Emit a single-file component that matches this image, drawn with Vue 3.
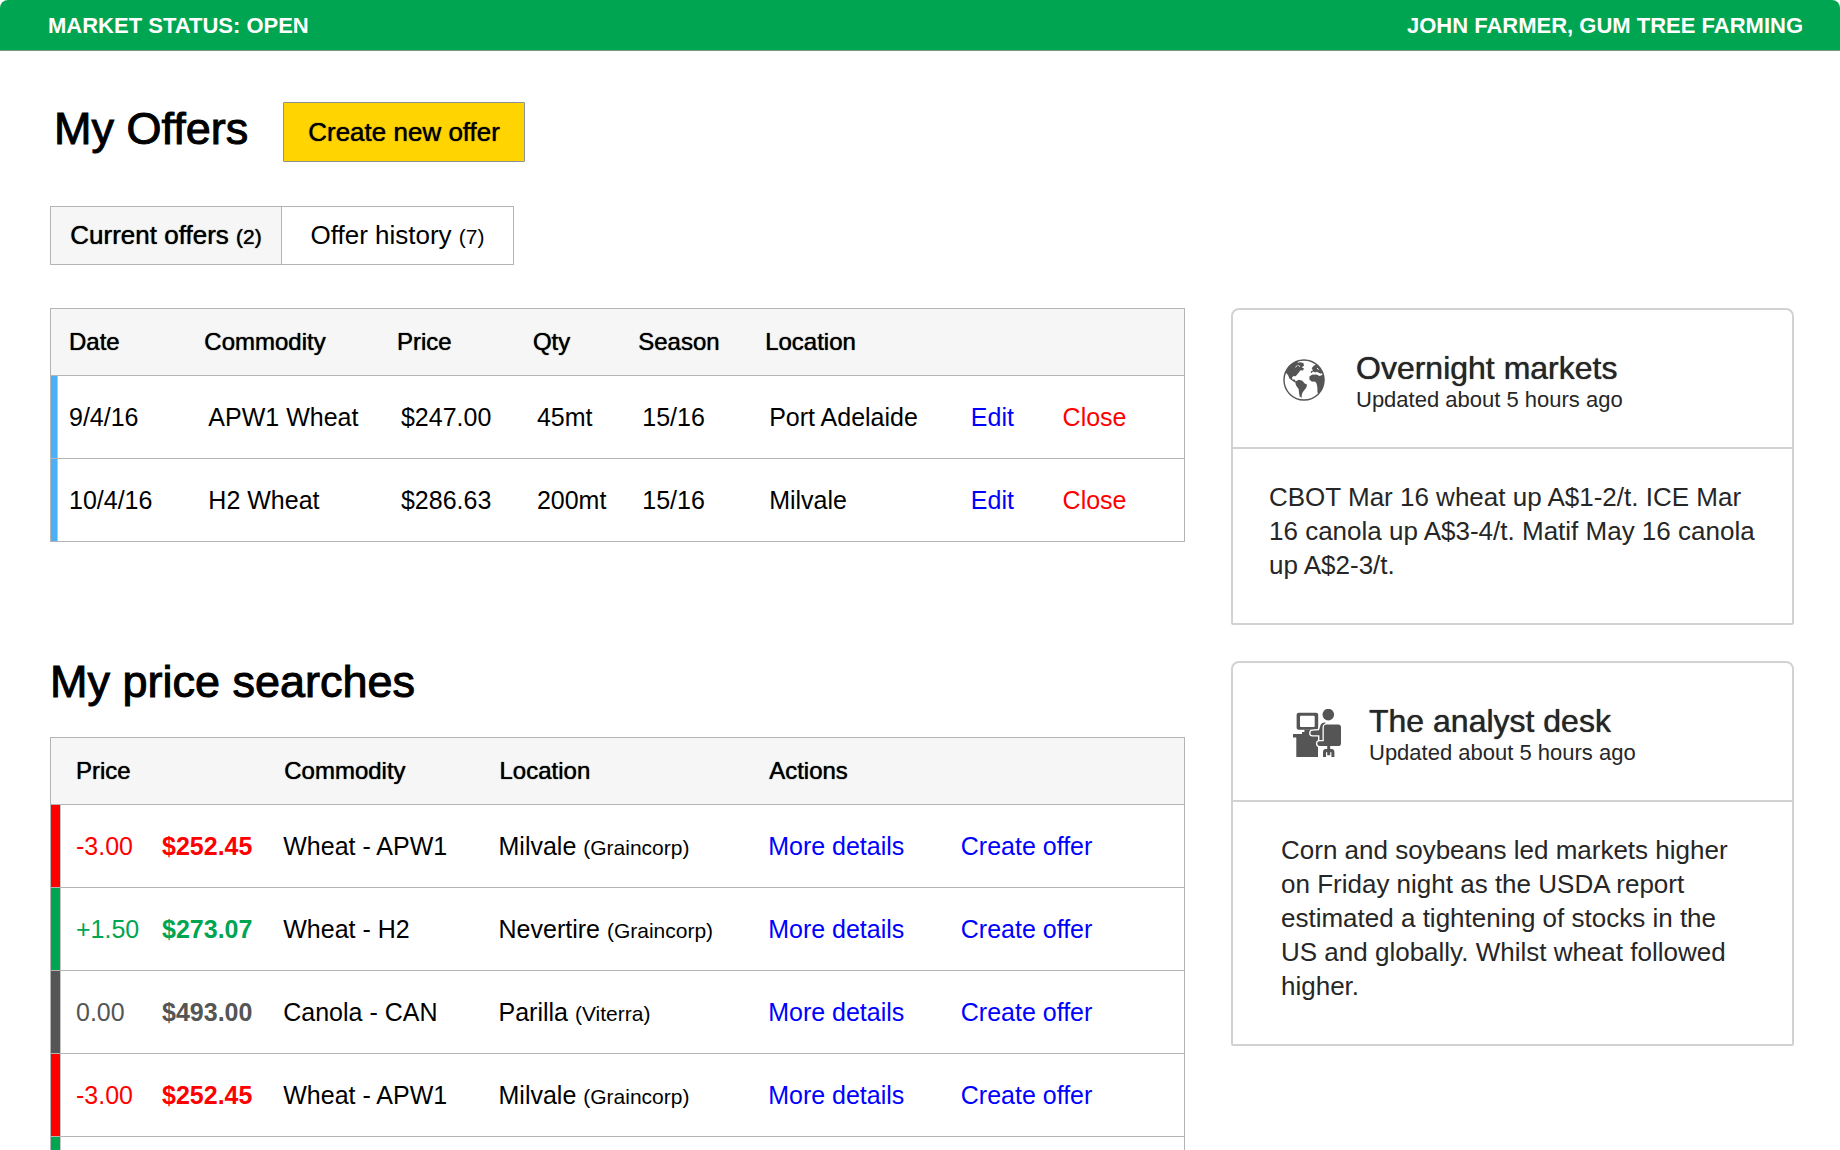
<script setup>
const offers = [
  { date: '9/4/16', commodity: 'APW1 Wheat', price: '$247.00', qty: '45mt', season: '15/16', location: 'Port Adelaide' },
  { date: '10/4/16', commodity: 'H2 Wheat', price: '$286.63', qty: '200mt', season: '15/16', location: 'Milvale' },
]

const searches = [
  { trend: 'down', change: '-3.00', price: '$252.45', commodity: 'Wheat - APW1', place: 'Milvale', buyer: 'Graincorp' },
  { trend: 'up', change: '+1.50', price: '$273.07', commodity: 'Wheat - H2', place: 'Nevertire', buyer: 'Graincorp' },
  { trend: 'flat', change: '0.00', price: '$493.00', commodity: 'Canola - CAN', place: 'Parilla', buyer: 'Viterra' },
  { trend: 'down', change: '-3.00', price: '$252.45', commodity: 'Wheat - APW1', place: 'Milvale', buyer: 'Graincorp' },
]
</script>

<template>
  <div class="page">
    <header class="topbar">
      <span>MARKET STATUS: OPEN</span>
      <span>JOHN FARMER, GUM TREE FARMING</span>
    </header>

    <main class="content">
      <div class="title-row">
        <h1>My Offers</h1>
        <button type="button" class="create medium">Create new offer</button>
      </div>

      <nav class="tabs">
        <button type="button" class="tab active medium">Current offers <small>(2)</small></button>
        <button type="button" class="tab">Offer history <small>(7)</small></button>
      </nav>

      <div class="columns">
        <div class="lists">
          <table class="offers">
            <colgroup>
              <col class="c-date" /><col class="c-commodity" /><col class="c-price" /><col class="c-qty" />
              <col class="c-season" /><col class="c-location" /><col class="c-edit" /><col />
            </colgroup>
            <thead>
              <tr class="medium">
                <th>Date</th>
                <th>Commodity</th>
                <th>Price</th>
                <th>Qty</th>
                <th>Season</th>
                <th colspan="3">Location</th>
              </tr>
            </thead>
            <tbody>
              <tr v-for="offer in offers" :key="offer.date">
                <td>{{ offer.date }}</td>
                <td>{{ offer.commodity }}</td>
                <td>{{ offer.price }}</td>
                <td>{{ offer.qty }}</td>
                <td>{{ offer.season }}</td>
                <td>{{ offer.location }}</td>
                <td><a href="#">Edit</a></td>
                <td><a href="#" class="danger">Close</a></td>
              </tr>
            </tbody>
          </table>

          <h2>My price searches</h2>

          <table class="searches">
            <colgroup>
              <col class="s-change" /><col class="s-price" /><col class="s-commodity" />
              <col class="s-location" /><col class="s-details" /><col />
            </colgroup>
            <thead>
              <tr class="medium">
                <th colspan="2">Price</th>
                <th>Commodity</th>
                <th>Location</th>
                <th colspan="2">Actions</th>
              </tr>
            </thead>
            <tbody>
              <tr v-for="(row, i) in searches" :key="i" :class="row.trend">
                <td class="change">{{ row.change }}</td>
                <td class="price">{{ row.price }}</td>
                <td>{{ row.commodity }}</td>
                <td>{{ row.place }} <small>({{ row.buyer }})</small></td>
                <td><a href="#">More details</a></td>
                <td><a href="#">Create offer</a></td>
              </tr>
              <tr class="up">
                <td></td>
                <td colspan="5"></td>
              </tr>
            </tbody>
          </table>
        </div>

        <aside class="news">
          <article class="card">
            <div class="card-head">
              <svg class="icon" viewBox="0 0 48 48" aria-hidden="true">
                <circle cx="24" cy="24" r="20" fill="none" stroke="#555" stroke-width="1.4" />
                <g fill="#555">
                  <path d="M5.6 16.500 8.500 10.600 13 6.800 18 4.800 17.600 6.800 20 6.200 23.400 7 24 9.800 21.600 11.200 24 12.600 23 14.400 20.600 14.200 18.800 16.600 17.200 18.400 15.600 20.200 13.600 20 12 21.400 12.400 23.400 14.600 23.600 15.800 25.600 18.400 26.400 17.600 27.200 14.600 26.200 12 24.600 9.400 22.600 8 19Z" />
                  <path d="M16 25.200 18.800 23.800 22.400 24.800 24.400 27.200 27 28.600 26.400 31.600 24.400 34 22.600 36.400 21.600 39.400 22 41.800 19.600 40.600 19 36.400 18.600 33 16.200 29.800 15.400 27.400Z" />
                  <path d="M29.400 20.600 32 18.800 36.400 18.600 39.600 20 43.400 18.600 44.400 23.600 43.400 29.800 41.200 34.800 38.600 38.400 37.400 36 37.400 31.400 36.600 27.800 35.400 25.800 31.600 25.600 29.400 23.400Z" />
                  <path d="M31.800 12 34 9.600 36.800 8.600 40.400 12.400 42.600 16.800 41 17.800 38.600 16.800 36.800 15.800 35.200 16.600 33 15.600 31.200 17.200 30.600 15.600 32.800 14.400Z" />
                </g>
                <path d="m18.400 9.400 1.600 1.200m-4.600.6 2-1.800M37 12.200l1.800 1.400" stroke="#fff" stroke-width="1" fill="none" />
              </svg>
              <div>
                <h3 class="medium">Overnight markets</h3>
                <p>Updated about 5 hours ago</p>
              </div>
            </div>
            <p class="card-body">
              CBOT Mar 16 wheat up A$1-2/t. ICE Mar 16 canola up A$3-4/t. Matif May 16 canola up A$2-3/t.
            </p>
          </article>

          <article class="card inset">
            <div class="card-head">
              <svg class="icon" viewBox="0 0 48 48" aria-hidden="true">
                <g fill="#555">
                  <path fill-rule="evenodd" d="M5.600 3.700h17.600a2 2 0 0 1 2 2v13a2 2 0 0 1-2 2H5.600a2 2 0 0 1-2-2v-13a2 2 0 0 1 2-2ZM8 6.700a1 1 0 0 0-1 1V17a1 1 0 0 0 1 1h12.700a1 1 0 0 0 1-1V7.700a1 1 0 0 0-1-1Z" />
                  <path d="M11.400 20.700h6.400v4.300H9v-2h2.400Z" />
                  <path d="M0 25h25v23H3.300V28.400H0Z" />
                  <circle cx="35.300" cy="5.600" r="5.800" />
                  <g stroke="#fff" stroke-width="2.600" paint-order="stroke">
                    <path d="M41 13.400H32q-3.600 0-4.600 3.200l-1.400 4.600-6.400.6a2.200 2.200 0 0 0 0 4.400h6.800v7h6V13.400Z" />
                    <path d="M33.600 15.600h11.600a2.800 2.800 0 0 1 2.800 2.800v15.800a2.800 2.800 0 0 1-2.800 2.800H26.600a2.400 2.400 0 0 1 0-4.800h4.200V18.400a2.800 2.800 0 0 1 2.800-2.800Z" />
                  </g>
                  <path d="M34.200 37h3v3h1.400q2.800 0 2.800 3v5h-3v-4.800h-1.200v3h-3v-3H33V48h-3v-5q0-3 2.800-3h1.400Z" />
                </g>
              </svg>
              <div>
                <h3 class="medium">The analyst desk</h3>
                <p>Updated about 5 hours ago</p>
              </div>
            </div>
            <p class="card-body">
              Corn and soybeans led markets higher on Friday night as the USDA report estimated a tightening of
              stocks in the US and globally. Whilst wheat followed higher.
            </p>
          </article>
        </aside>
      </div>
    </main>
  </div>
</template>

<style>
body {
  background: #fff;
}
</style>

<style scoped>
.page {
  height: 100vh;
  overflow: hidden;
  font-family: "Liberation Sans", Arial, Helvetica, sans-serif;
  font-size: 25px;
  color: #000;
}

/* Slightly heavier than regular, lighter than bold */
.medium {
  text-shadow: 0 0 1px currentColor;
}

h1,
h2,
h3,
p {
  margin: 0;
  font-weight: 400;
}

button {
  font: inherit;
  font-size: 26px;
  color: inherit;
  cursor: pointer;
}

small {
  font-size: 21px;
}

a {
  color: #00f;
  text-decoration: none;
}

a.danger {
  color: #f00;
}

.topbar {
  display: flex;
  justify-content: space-between;
  align-items: center;
  box-sizing: border-box;
  height: 51px;
  padding: 2px 37px 0 48px;
  border-bottom: 1px solid #7d9a88;
  border-radius: 8px 8px 0 0;
  background: #00a551;
  color: #fff;
  font-size: 22px;
  font-weight: 700;
}

.content {
  padding: 51px 46px 0 50px;
}

.title-row {
  display: flex;
  align-items: flex-start;
  gap: 35px;
  padding-left: 4px;
}

h1,
h2 {
  font-size: 45px;
  line-height: 54px;
  -webkit-text-stroke: 1px currentColor;
}

.create {
  height: 60px;
  padding: 0 24px;
  border: 1px solid #8f8f8f;
  border-radius: 1px;
  background: #ffd400;
}

.tabs {
  display: flex;
  margin: 44px 0 43px;
}

.tab {
  width: 232px;
  height: 59px;
  padding: 0;
  border: 1px solid #b4b4b4;
  background: #fff;
}

.tab + .tab {
  border-left: 0;
}

.tab.active {
  background: #f6f6f6;
}

.columns {
  display: grid;
  grid-template-columns: minmax(0, 1135fr) minmax(0, 563fr);
  gap: 46px;
  align-items: start;
}

table {
  width: 100%;
  table-layout: fixed;
  border: 1px solid #b4b4b4;
  border-bottom: 0;
  border-spacing: 0;
}

th,
td {
  box-sizing: border-box;
  padding: 0 0 0 18px;
  border-bottom: 1px solid #b4b4b4;
  text-align: left;
  white-space: nowrap;
}

th {
  height: 67px;
  background: #f6f6f6;
  font-size: 24px;
  font-weight: 400;
}

td {
  height: 83px;
}

.offers th + th {
  padding-left: 14px;
}

.offers td:first-child {
  box-shadow: inset 6px 0 #4cb0f9, inset 7px 0 #c4c4c4;
}

.c-date { width: 12.3%; }
.c-commodity { width: 17%; }
.c-price { width: 12%; }
.c-qty { width: 9.3%; }
.c-season { width: 11.2%; }
.c-location { width: 17.8%; }
.c-edit { width: 8.1%; }

h2 {
  margin: 113px 0 28px;
}

.searches td {
  padding-left: 17px;
}

.searches th:first-child,
.searches td:first-child {
  padding-left: 25px;
}

.searches td:first-child {
  box-shadow: inset 9px 0 var(--trend), inset 10px 0 #c4c4c4;
}

.change,
.price {
  color: var(--trend);
}

.price {
  font-weight: 700;
}

.down { --trend: #f00; }
.up { --trend: #00a551; }
.flat { --trend: #555; }

.s-change { width: 8.3%; }
.s-price { width: 10.7%; }
.s-commodity { width: 19%; }
.s-location { width: 23.8%; }
.s-details { width: 17%; }

.news {
  display: grid;
  gap: 36px;
}

.card {
  border: 2px solid #d2d2d2;
  border-radius: 8px 8px 2px 2px;
  color: #262626;
}

.card-head {
  display: flex;
  gap: 28px;
  padding: 41px 30px 32px 47px;
  border-bottom: 2px solid #d2d2d2;
}

.icon {
  flex: none;
  width: 48px;
  height: 48px;
  margin-top: 5px;
}

h3 {
  font-size: 32px;
  line-height: 34px;
}

.card-head p {
  font-size: 22px;
  line-height: 30px;
}

.card-body {
  padding: 31px 30px 41px 36px;
  font-size: 26px;
  line-height: 34px;
}

.inset .card-head {
  padding-left: 60px;
}

.inset .card-body {
  padding-left: 48px;
  padding-right: 48px;
}
</style>
